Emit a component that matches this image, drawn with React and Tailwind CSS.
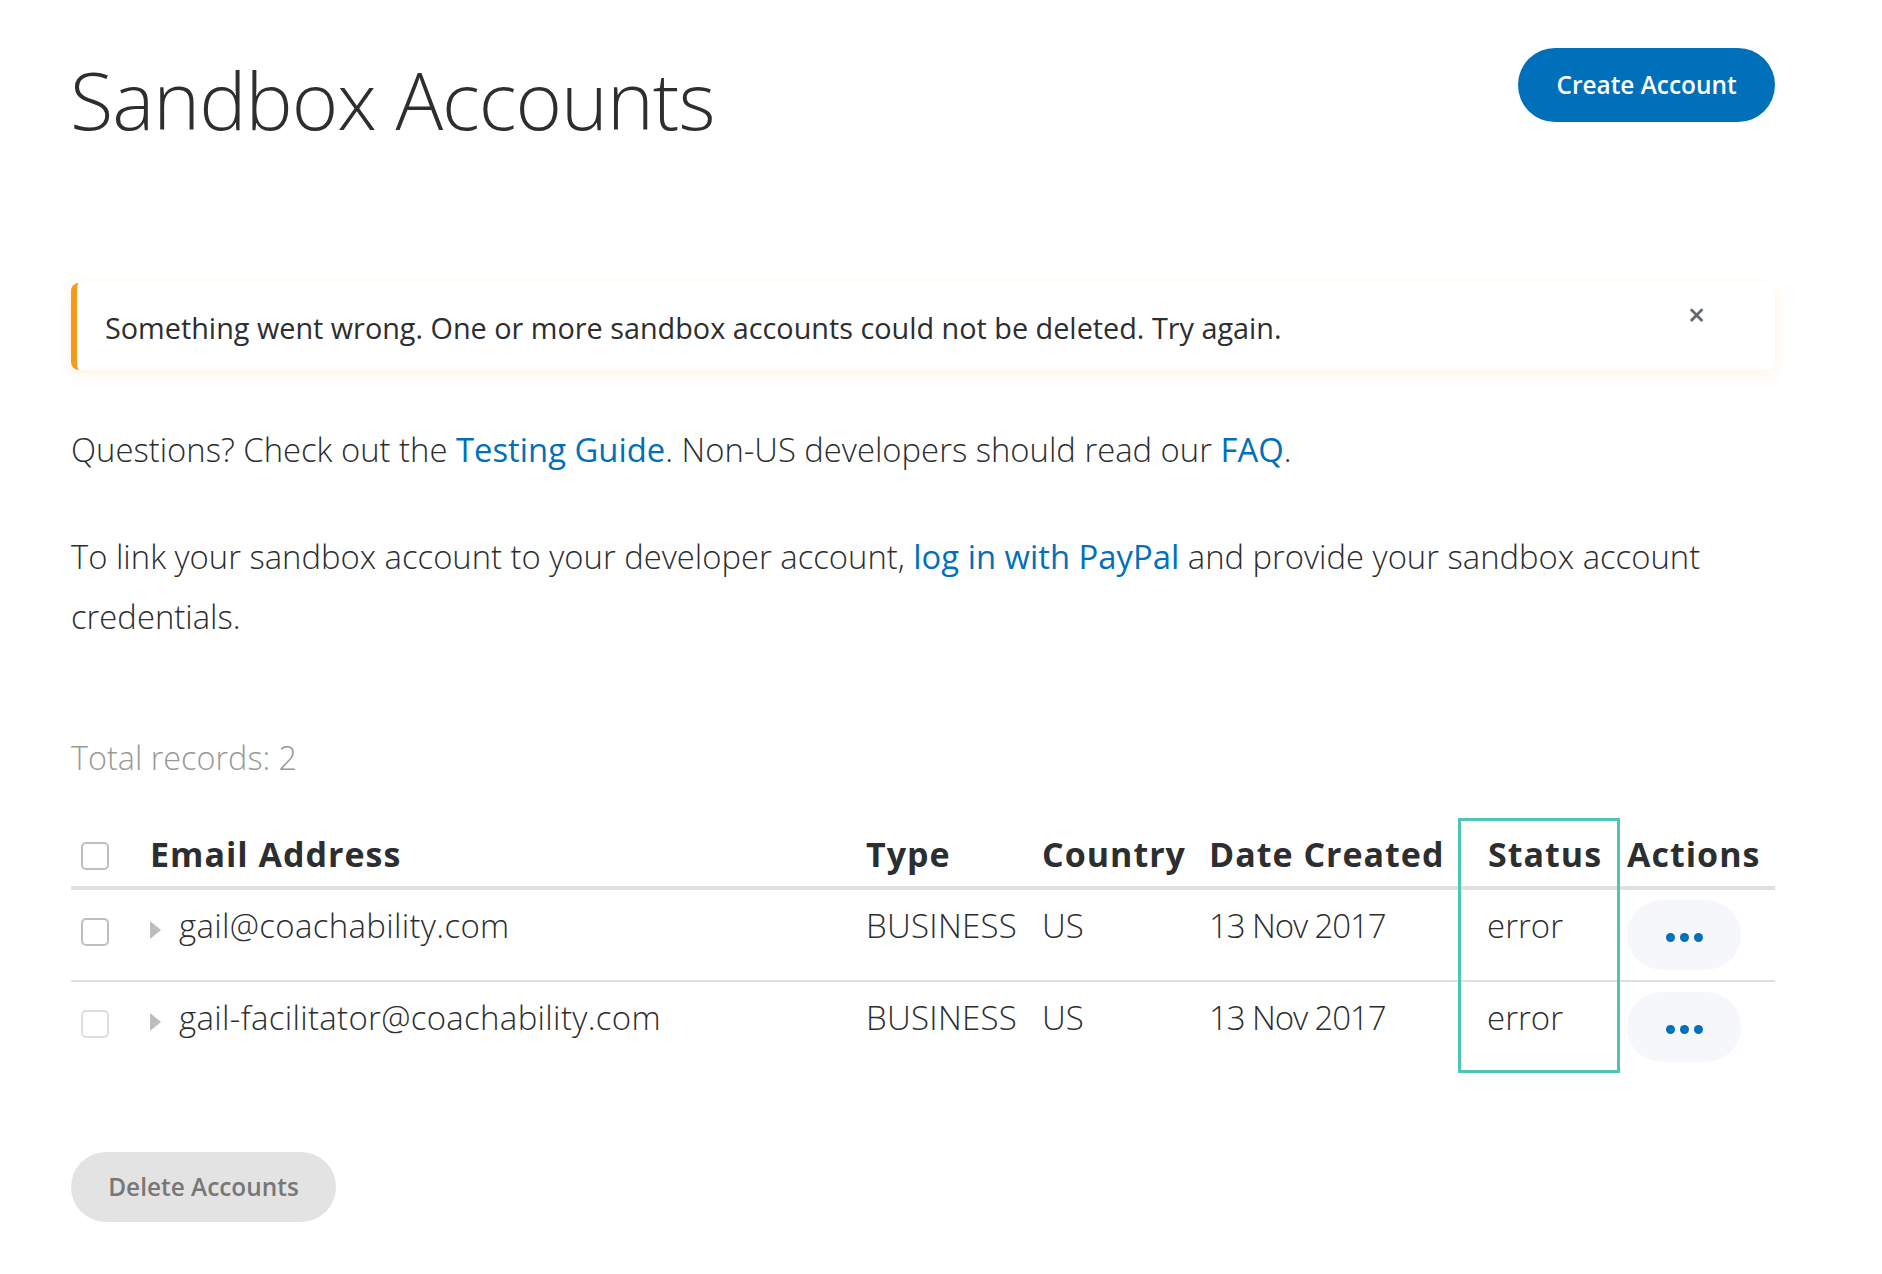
const cols = "grid grid-cols-[78px_717px_176px_167px_278px_140px_148px]";
const light = "font-light text-[33px] leading-[40px] text-[#2c2e2f]";

function Check({ faint }) {
  return (
    <span className={"ml-[10px] block w-[28px] h-[28px] rounded-[5px] border-2 bg-white " + (faint ? "border-[#dedede]" : "border-[#bfbfbf]")} />
  );
}

function Row({ email, faint, border }) {
  return (
    <div className={cols + " h-[92px] " + (border ? "border-b-2 border-[#e0e0e0]" : "")}>
      <div className="pt-[28px]"><Check faint={faint} /></div>
      <div className="flex items-start pt-[16px] pl-[1px]">
        <svg width="11" height="18" viewBox="0 0 11 18" className="mt-[15px] mr-[18px]"><path d="M0 0 L11 9 L0 18 Z" fill="#bdbdbd" /></svg>
        <span className={light + " tracking-[0.3px]"}>{email}</span>
      </div>
      <div className={"pt-[16px] tracking-[0.3px] " + light}>BUSINESS</div>
      <div className={"pt-[16px] " + light}>US</div>
      <div className={"pt-[16px] tracking-[-1.1px] " + light}>13 Nov 2017</div>
      <div className={"pt-[16px] " + light}>error</div>
      <div className="pt-[10px]">
        <button className="w-[114px] h-[70px] rounded-[35px] bg-[#f5f7fa] flex items-center justify-center gap-[5px] pt-[4px]">
          <span className="w-[9px] h-[9px] rounded-full bg-[#0070ba]" />
          <span className="w-[9px] h-[9px] rounded-full bg-[#0070ba]" />
          <span className="w-[9px] h-[9px] rounded-full bg-[#0070ba]" />
        </button>
      </div>
    </div>
  );
}

export default function App() {
  return (
    <div className="relative w-[1882px] h-[1274px] bg-white pl-[71px] pr-[107px] pt-[48px] font-['Open_Sans',sans-serif] text-[#2c2e2f]">
      <header className="flex justify-between items-start h-[235px]">
        <h1 className="font-light text-[79.4px] leading-[90px] tracking-[-1px] text-[#2c2e2f] mt-[6px] ml-[-1px]">Sandbox Accounts</h1>
        <button className="w-[257px] h-[74px] rounded-[37px] bg-[#0070ba] text-white font-semibold text-[24.4px]">Create Account</button>
      </header>

      <div className="relative h-[87px] bg-white rounded-[8px] border-l-[6px] border-[#f59a1b] shadow-[0_4px_14px_rgba(245,154,27,0.12)] flex items-center pl-[28px] pt-[2px] text-[28.8px] text-[#2c2e2f]">
        <span>Something went wrong. One or more sandbox accounts could not be deleted. Try again.</span>
        <span className="absolute left-[1611px] top-[16px] font-semibold text-[30px] leading-[32px] text-[#666]">×</span>
      </div>

      <p className="mt-[60px] font-light text-[32.8px] leading-[40px]">
        Questions? Check out the <a className="text-[#0070ba] font-medium">Testing Guide</a>. Non-US developers should read our <a className="text-[#0070ba] font-medium">FAQ</a>.
      </p>
      <p className="mt-[57px] font-light text-[32.8px] leading-[60px]">
        To link your sandbox account to your developer account, <a className="text-[#0070ba] font-medium">log in with PayPal</a> and provide your sandbox account credentials.
      </p>

      <p className="mt-[90px] font-light text-[32.4px] leading-[40px] text-[#999]">Total records: 2</p>

      <section className="mt-[43px]">
        <div className={cols + " h-[70px] border-b-4 border-[#e0e0e0] font-bold text-[34px] leading-[40px] tracking-[1px] text-[#2c2e2f]"}>
          <div className="pt-[22px]"><Check /></div>
          <div className="pt-[14px] pl-[1px]">Email Address</div>
          <div className="pt-[14px]">Type</div>
          <div className="pt-[14px]">Country</div>
          <div className="pt-[14px]">Date Created</div>
          <div className="pt-[14px] pl-[1px]">Status</div>
          <div className="pt-[14px]">Actions</div>
        </div>
        <Row email="gail@coachability.com" border />
        <Row email="gail-facilitator@coachability.com" faint />
      </section>

      <button className="mt-[78px] w-[265px] h-[70px] rounded-[35px] bg-[#e3e3e3] text-[#777] font-semibold text-[24.4px]">Delete Accounts</button>

      <div className="absolute left-[1458px] top-[818px] w-[162px] h-[255px] border-[3px] border-[#4fc3b5] pointer-events-none" />
    </div>
  );
}
